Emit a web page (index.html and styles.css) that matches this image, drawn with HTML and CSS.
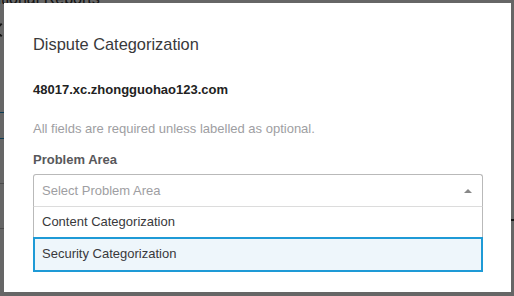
FILE: index.html
```html
<!DOCTYPE html>
<html lang="en">
<head>
  <meta charset="UTF-8" />
  <meta name="viewport" content="width=device-width, initial-scale=1.0" />
  <link rel="stylesheet" href="styles.css">
</head>
<body>

  <!-- page behind the dialog -->
  <div class="page">
    <div class="page-title">Additional Reports</div>
    <div class="page-body">
      <div class="side">
        <span class="chevron"></span>
        <div class="tab"></div>
        <div class="tab"></div>
        <div class="side-row"></div>
        <div class="side-row"></div>
      </div>
      <div class="main">
        <div class="main-row"></div>
      </div>
    </div>
  </div>

  <div class="backdrop"></div>

  <div class="modal">
    <h2 class="modal-title">Dispute Categorization</h2>
    <div class="domain">48017.xc.zhongguohao123.com</div>
    <p class="hint">All fields are required unless labelled as optional.</p>
    <label class="field-label">Problem Area</label>

    <div class="select">
      <div class="select-head">
        <span class="placeholder">Select Problem Area</span>
        <span class="caret"></span>
      </div>
      <ul class="options">
        <li class="option">Content Categorization</li>
        <li class="option active">Security Categorization</li>
      </ul>
    </div>
  </div>

</body>
</html>
```

FILE: styles.css
```css
body {
  margin: 0;
  width: 514px;
  height: 296px;
  overflow: hidden;
  background: #fff;
  font-family: 'Liberation Sans', Arial, sans-serif;
  color: #333;
}

/* background page */
.page-title {
  font-size: 16px;
  line-height: 20px;
  margin: -11px 0 0 -31px;
  color: #333;
}

.page-body {
  display: flex;
}

.side {
  width: 120px;
  padding-top: 16px;
}

.chevron {
  display: block;
  width: 8px;
  height: 8px;
  margin-left: -4px;
  border-left: 2px solid #333;
  border-bottom: 2px solid #333;
  transform: rotate(45deg);
}

.tab {
  height: 25px;
  border-bottom: 1px solid #1e9ad6;
}

.tab:first-of-type {
  margin-top: 52px;
}

.side-row {
  height: 44px;
  border-bottom: 1px solid #bbb;
}

.side-row:first-of-type {
  margin-top: 33px;
}

.main {
  flex: 1;
}

.main-row {
  margin-top: 206px;
  height: 4px;
  border-bottom: 2px solid #333;
}

.backdrop {
  position: fixed;
  top: 0;
  left: 0;
  right: 0;
  bottom: 0;
  background: rgba(0, 0, 0, 0.6);
}

/* dialog */
.modal {
  position: fixed;
  top: 3px;
  left: 4px;
  width: 507px;
  height: 289px;
  box-sizing: border-box;
  padding: 31px 28px 0 29px;
  background: #fff;
}

.modal-title {
  margin: 0;
  font-size: 16.4px;
  font-weight: normal;
  line-height: 20px;
  color: #39393b;
}

.domain {
  margin-top: 28px;
  font-size: 13px;
  font-weight: bold;
  line-height: 15px;
  color: #222;
}

.hint {
  margin: 24px 0 0;
  font-size: 13px;
  line-height: 15px;
  color: #9e9ea2;
}

.field-label {
  display: block;
  margin-top: 16px;
  font-size: 13px;
  font-weight: bold;
  line-height: 15px;
  color: #58585b;
}

.select {
  margin-top: 7px;
  width: 450px;
  font-size: 13px;
}

.select-head {
  display: flex;
  align-items: center;
  justify-content: space-between;
  height: 31px;
  padding: 0 10px 0 8px;
  border: 1px solid #b9b9b9;
  border-bottom-color: #dcdcdc;
  border-radius: 3px 3px 0 0;
}

.placeholder {
  line-height: 31px;
  color: #9e9ea2;
}

.caret {
  width: 0;
  height: 0;
  border-left: 4px solid transparent;
  border-right: 4px solid transparent;
  border-bottom: 4px solid #888;
}

.options {
  list-style: none;
  margin: 0;
  padding: 0;
}

.option {
  line-height: 28px;
  padding: 1px 8px 1px;
  border-left: 1px solid #b9b9b9;
  border-right: 1px solid #b9b9b9;
  color: #39393b;
}

.option.active {
  padding: 1px 7px 2px;
  border: 2px solid #1e9ad6;
  background: #eef6fb;
}
```
